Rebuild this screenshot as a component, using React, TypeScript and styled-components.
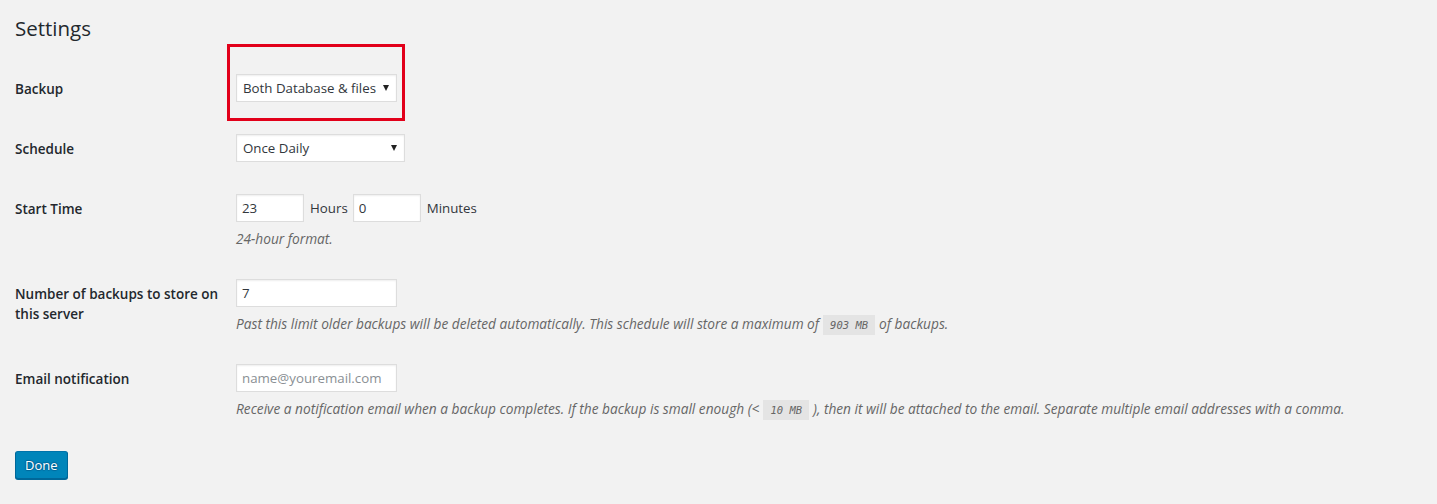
import React from "react";
import styled, { createGlobalStyle } from "styled-components";

const GlobalStyle = createGlobalStyle`
  html, body {
    margin: 0;
    padding: 0;
    background: #f2f2f2;
  }
  body {
    font-family: "Open Sans", "Noto Sans", sans-serif;
    color: #23282d;
    font-size: 14px;
  }
`;

const Page = styled.div`
  padding: 15px 15px 20px 15px;
  min-height: 504px;
  box-sizing: border-box;
`;

const Heading = styled.h2`
  margin: 0 0 17px;
  font-size: 20.5px;
  line-height: 26px;
  font-weight: 400;
  color: #23282d;
`;

const Row = styled.div`
  display: grid;
  grid-template-columns: 221px 1fr;
  padding: 15px 0;
`;

const Label = styled.div`
  padding: 6px 10px 0 0;
  font-size: 13.5px;
  font-weight: 600;
  line-height: 20px;
  color: #23282d;
`;

const Controls = styled.div`
  display: flex;
  align-items: center;
  height: 30px;
  font-size: 13.3px;
  color: #32373c;
`;

const Field = styled.input<{ $width: number }>`
  box-sizing: border-box;
  width: ${(p) => p.$width}px;
  height: 28px;
  margin: 1px 0;
  padding: 3px 5px;
  border: 1px solid #ddd;
  box-shadow: inset 0 1px 2px rgba(0, 0, 0, 0.07);
  background: #fff;
  font-family: inherit;
  font-size: 13.3px;
  color: #32373c;
  outline: none;

  &::placeholder {
    color: #8a8f94;
  }
`;

const Unit = styled.span`
  margin: 0 5px 0 6px;
`;

const SelectBox = styled.div<{ $width: number }>`
  position: relative;
  box-sizing: border-box;
  display: flex;
  align-items: center;
  width: ${(p) => p.$width}px;
  height: 28px;
  margin: 1px 0;
  padding: 0 24px 0 6px;
  border: 1px solid #ddd;
  box-shadow: inset 0 1px 2px rgba(0, 0, 0, 0.07);
  background: #fff;
  color: #32373c;
  white-space: nowrap;
`;

const Arrow = styled.span`
  position: absolute;
  right: 7px;
  top: 10px;
  width: 0;
  height: 0;
  border-left: 3px solid transparent;
  border-right: 3px solid transparent;
  border-top: 6px solid #222;
`;

const Highlight = styled.span`
  position: absolute;
  left: -10px;
  top: -31px;
  right: -9px;
  bottom: -20px;
  border: 3px solid #e2001a;
  pointer-events: none;
`;

const Description = styled.p`
  margin: 6px 0 0;
  font-size: 13.7px;
  line-height: 19px;
  font-style: italic;
  color: #666;
`;

const Code = styled.code`
  margin: 0 4px;
  padding: 4px 7px 4px;
  background: #e4e4e4;
  font-family: "DejaVu Sans Mono", "Liberation Mono", monospace;
  font-style: italic;
  font-size: 10.5px;
  line-height: 1;
  color: #666;
`;

const DoneButton = styled.button`
  margin-top: 18px;
  height: 28px;
  padding: 0 9px 1px;
  background: #0085ba;
  border: 1px solid #0073aa;
  border-color: #0073aa #006799 #006799;
  border-radius: 3px;
  box-shadow: 0 1px 0 #006799;
  color: #fff;
  font-family: inherit;
  font-size: 13px;
  text-shadow: 0 -1px 1px #006799, 1px 0 1px #006799, 0 1px 1px #006799, -1px 0 1px #006799;
  cursor: pointer;
`;

type SelectProps = { value: string; width: number; highlighted?: boolean };

const Select = ({ value, width, highlighted }: SelectProps) => (
  <SelectBox $width={width}>
    {value}
    <Arrow />
    {highlighted && <Highlight />}
  </SelectBox>
);

export default function App() {
  return (
    <Page>
      <GlobalStyle />
      <Heading>Settings</Heading>

      <Row>
        <Label>Backup</Label>
        <div>
          <Controls>
            <Select value="Both Database & files" width={161} highlighted />
          </Controls>
        </div>
      </Row>

      <Row>
        <Label>Schedule</Label>
        <div>
          <Controls>
            <Select value="Once Daily" width={169} />
          </Controls>
        </div>
      </Row>

      <Row>
        <Label>Start Time</Label>
        <div>
          <Controls>
            <Field $width={68} type="text" defaultValue="23" />
            <Unit>Hours</Unit>
            <Field $width={68} type="text" defaultValue="0" />
            <Unit>Minutes</Unit>
          </Controls>
          <Description>24-hour format.</Description>
        </div>
      </Row>

      <Row>
        <Label>Number of backups to store on this server</Label>
        <div>
          <Controls>
            <Field $width={161} type="text" defaultValue="7" />
          </Controls>
          <Description>
            Past this limit older backups will be deleted automatically. This schedule will store a maximum of
            <Code>903 MB</Code>
            of backups.
          </Description>
        </div>
      </Row>

      <Row>
        <Label>Email notification</Label>
        <div>
          <Controls>
            <Field $width={161} type="text" placeholder="name@youremail.com" />
          </Controls>
          <Description>
            Receive a notification email when a backup completes. If the backup is small enough (&lt;
            <Code>10 MB</Code>
            ), then it will be attached to the email. Separate multiple email addresses with a comma.
          </Description>
        </div>
      </Row>

      <DoneButton>Done</DoneButton>
    </Page>
  );
}
